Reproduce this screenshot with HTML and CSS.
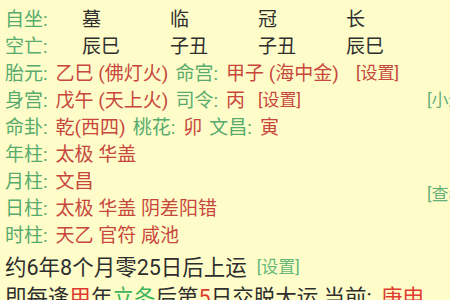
FILE: index.html
```html
<!DOCTYPE html>
<html lang="zh">
<head>
<meta charset="utf-8">
<link rel="stylesheet" href="styles.css">
</head>
<body>
<div class="page">
  <main class="main">
    <div class="grid-row">
      <span class="lbl">自坐:</span><span class="cell">墓</span><span class="cell">临</span><span class="cell">冠</span><span class="cell">长</span>
    </div>
    <div class="grid-row">
      <span class="lbl">空亡:</span><span class="cell">辰巳</span><span class="cell">子丑</span><span class="cell">子丑</span><span class="cell">辰巳</span>
    </div>
    <div class="row">
      <span class="lbl">胎元:</span><span class="val">乙巳 (佛灯火)</span>
      <span class="lbl">命宫:</span><span class="val">甲子 (海中金)</span>
      <span class="set red wider">[设置]</span>
    </div>
    <div class="row">
      <span class="lbl">身宫:</span><span class="val">戊午 (天上火)</span>
      <span class="lbl">司令:</span><span class="val">丙</span>
      <span class="set red wide">[设置]</span>
    </div>
    <div class="row">
      <span class="lbl">命卦:</span><span class="val">乾(西四)</span>
      <span class="lbl">桃花:</span><span class="val">卯</span>
      <span class="lbl">文昌:</span><span class="val">寅</span>
    </div>
    <div class="row">
      <span class="lbl">年柱:</span><span class="val">太极 华盖</span>
    </div>
    <div class="row">
      <span class="lbl">月柱:</span><span class="val">文昌</span>
    </div>
    <div class="row">
      <span class="lbl">日柱:</span><span class="val">太极 华盖 阴差阳错</span>
    </div>
    <div class="row">
      <span class="lbl">时柱:</span><span class="val">天乙 官符 咸池</span>
    </div>
    <div class="big-row gap-top">
      <span>约6年8个月零25日后上运</span><span class="set green">[设置]</span>
    </div>
    <div class="big-row">
      <span>即每逢<b class="hl-red">甲</b>年<b class="hl-green">立冬</b>后第<b class="hl-red">5</b>日交脱大运 当前: <b class="now">庚申</b></span>
    </div>
  </main>
  <aside class="side">
    <span class="side-link first">[小运]</span>
    <span class="side-link second">[查看]</span>
  </aside>
</div>
</body>
</html>
```
FILE: styles.css
```css
html, body {
  margin: 0;
  padding: 0;
  background: #fefdc9;
  overflow: hidden;
}
body {
  font-family: Roboto, "Noto Sans CJK SC", sans-serif;
  color: #2e2e2e;
  width: 450px;
  height: 300px;
}
.page {
  display: flex;
  padding: 4px 0 0 5px;
}
.main {
  width: 422px;
  flex: none;
  display: flex;
  flex-direction: column;
}
.grid-row {
  display: grid;
  grid-template-columns: 77px repeat(4, 88px);
  height: 27px;
  align-items: center;
  font-size: 19px;
  white-space: nowrap;
}
.row {
  display: flex;
  align-items: center;
  height: 27px;
  font-size: 19px;
  white-space: nowrap;
}
.lbl {
  color: #58ab6d;
  margin-right: 8px;
}
.val {
  color: #c8473d;
  margin-right: 7px;
}
.set {
  font-size: 17px;
}
.set.wide {
  margin-left: 6px;
}
.set.wider {
  margin-left: 10px;
}
.red { color: #c8473d; }
.green { color: #66b97a; }
.big-row {
  display: flex;
  align-items: center;
  height: 30px;
  font-size: 21.5px;
  white-space: nowrap;
}
.gap-top {
  margin-top: 3px;
}
.big-row .set {
  margin-left: 10px;
}
.big-row b {
  font-weight: normal;
}
.hl-red { color: #e0392f; }
.hl-green { color: #3fb35a; }
.now {
  color: #e0392f;
  margin-left: 4px;
}
.side {
  display: flex;
  flex-direction: column;
  white-space: nowrap;
  font-size: 17px;
  color: #66b07a;
}
.side-link {
  line-height: 20px;
}
.side-link.first {
  margin-top: 86px;
}
.side-link.second {
  margin-top: 74px;
}
```
